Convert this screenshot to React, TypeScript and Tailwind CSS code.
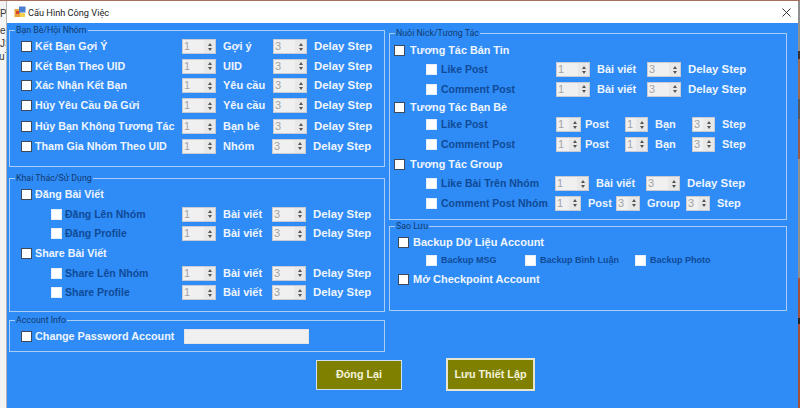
import type { ReactNode } from 'react';

const Check = ({ dark }: { dark?: boolean }) => (
  <span
    className={`box-border block h-[11px] w-[11px] shrink-0 bg-white ${dark ? 'border border-[#3c4a5c]' : 'border border-[#e6eef9]'}`}
  />
);

const Spin = ({ value, w }: { value: number; w: number }) => (
  <span
    className="box-border flex h-[15px] shrink-0 items-stretch border border-[#c8ccd2] bg-[#f0f0f0] text-[11px] font-normal leading-[13px] text-[#a3a3a3]"
    style={{ width: w }}
  >
    <span className="flex-1 pl-[1px]">{value}</span>
    <span className="flex w-[11px] flex-col items-center justify-center gap-[2px] bg-[#e8e8e8]">
      <span className="h-0 w-0 border-x-[2.5px] border-b-[3px] border-x-transparent border-b-[#555]" />
      <span className="h-0 w-0 border-x-[2.5px] border-t-[3px] border-x-transparent border-t-[#555]" />
    </span>
  </span>
);

const Txt = ({ w, ml, children }: { w?: number; ml: number; children: ReactNode }) => (
  <span className="shrink-0 text-[#eef5ff]" style={{ width: w, marginLeft: ml }}>
    {children}
  </span>
);

const Delay = ({ ml = 7 }: { ml?: number }) => (
  <span className="shrink-0 text-[11.4px] text-[#eef5ff]" style={{ marginLeft: ml }}>
    Delay Step
  </span>
);

interface RowProps {
  label: string;
  sub?: boolean;
  unit: string;
  unitW?: number;
}

// one option line of the left column
const Row = ({ label, sub, unit, unitW = 50 }: RowProps) => (
  <div className={`flex h-[19.6px] items-center ${sub ? 'pl-[41px]' : 'pl-[11px]'}`}>
    <Check dark={!sub} />
    <span
      className={`ml-[3px] shrink-0 ${sub ? 'w-[117px] text-[10.5px] text-[#0f4a96]' : 'w-[147px] text-[10.7px] text-[#eef5ff]'}`}
    >
      {label}
    </span>
    <Spin value={1} w={34} />
    <Txt ml={7} w={unitW}>
      {unit}
    </Txt>
    <Spin value={3} w={34} />
    <Delay />
  </div>
);

const Head = ({ label }: { label: string }) => (
  <div className="flex h-[19.6px] items-center pl-[11px] text-[10.7px] text-[#eef5ff]">
    <Check dark />
    <span className="ml-[3px]">{label}</span>
  </div>
);

const Group = ({
  title,
  className,
  children,
}: {
  title: string;
  className: string;
  children: ReactNode;
}) => (
  <fieldset className={`relative box-border border border-[#a9cdf5] ${className}`}>
    <span className="absolute left-[5px] top-[-6px] bg-[#2f8cf6] px-[1px] font-['Roboto',sans-serif] text-[8.8px] font-normal leading-[11px] text-[#123a6e]">
      {title}
    </span>
    {children}
  </fieldset>
);

const RightHead = ({ label, h }: { label: string; h: string }) => (
  <div className={`flex items-center pl-[4px] text-[10.8px] text-[#eef5ff] ${h}`}>
    <Check dark />
    <span className="ml-[5px]">{label}</span>
  </div>
);

const RightSub = ({
  label,
  labelW = 115,
  children,
}: {
  label: string;
  labelW?: number;
  children: ReactNode;
}) => (
  <div className="flex h-[19.5px] items-center pl-[36px]">
    <Check />
    <span className="ml-[4px] shrink-0 text-[10.5px] text-[#0f4a96]" style={{ width: labelW }}>
      {label}
    </span>
    {children}
  </div>
);

const rightStrip = [
  ['h-[50px]', 'bg-[#8f8f8f]'],
  ['h-[8px]', 'bg-[#3a3030]'],
  ['h-[40px]', 'bg-[#a06a50]'],
  ['h-[20px]', 'bg-[#555a60]'],
  ['h-[40px]', 'bg-[#9a5a48]'],
  ['h-[120px]', 'bg-[#8f8f8f]'],
  ['h-[40px]', 'bg-[#a5503a]'],
  ['h-[6px]', 'bg-[#23262c]'],
  ['h-[84px]', 'bg-[#a5503a]'],
];

export default function App() {
  return (
    <div className="h-[408px] w-[800px] overflow-hidden whitespace-nowrap bg-[#f3f3f3] font-['Liberation_Sans',Arial,sans-serif] text-[11px] font-bold leading-[15px]">
      <div className="h-[1px] bg-[#a8705a]" />
      <div className="flex h-[407px]">
        <div className="w-[7px] shrink-0 overflow-hidden border-r border-[#b5b5b5] pt-[6px] text-[10px] font-normal leading-[13px] text-[#333]">
          <div>Pa</div>
          <div className="mt-[4px] ml-[-5px]">se</div>
          <div>JS</div>
          <div className="ml-[-1px]">u7</div>
        </div>
        <div className="w-[791px] shrink-0">
          <div className="flex h-[22px] items-center bg-white pl-[7px] pr-[7px]">
            <svg width="12" height="12" viewBox="0 0 12 12" className="shrink-0">
              <rect x="0.5" y="3" width="6" height="8" fill="#e8a33d" />
              <rect x="5" y="0.5" width="6.5" height="6" fill="#4a7fd0" />
              <rect x="2" y="5" width="3" height="3" fill="#d9412c" />
              <rect x="6" y="7" width="5" height="4" fill="#f2d24b" />
            </svg>
            <span className="ml-[2px] font-['Roboto',sans-serif] text-[9.2px] font-normal text-[#222]">
              Cấu Hình Công Việc
            </span>
            <svg width="9" height="9" viewBox="0 0 9 9" className="ml-auto shrink-0">
              <path d="M0.5 0.5 L8.5 8.5 M8.5 0.5 L0.5 8.5" stroke="#222" strokeWidth="0.9" fill="none" />
            </svg>
          </div>
          <div className="h-[385px] bg-[#2f8cf6]">
            <div className="flex h-[329px] pl-[2px] pt-[7px]">
              <div className="flex w-[376px] shrink-0 flex-col">
                <Group title="Bạn Bè/Hội Nhóm" className="h-[137px] pt-[6px]">
                  <Row label="Kết Bạn Gợi Ý" unit="Gợi ý" />
                  <Row label="Kết Bạn Theo UID" unit="UID" />
                  <Row label="Xác Nhận Kết Bạn" unit="Yêu cầu" />
                  <Row label="Hủy Yêu Cầu Đã Gửi" unit="Yêu cầu" />
                  <div className="h-[1.5px]" />
                  <Row label="Hủy Bạn Không Tương Tác" unit="Bạn bè" />
                  <Row label="Tham Gia Nhóm Theo UID" unit="Nhóm" unitW={49} />
                </Group>
                <Group title="Khai Thác/Sử Dụng" className="mt-[11px] h-[134px] pt-[6px]">
                  <Head label="Đăng Bài Viết" />
                  <Row label="Đăng Lên Nhóm" sub unit="Bài viết" unitW={49} />
                  <Row label="Đăng Profile" sub unit="Bài viết" unitW={49} />
                  <Head label="Share Bài Viết" />
                  <Row label="Share Lên Nhóm" sub unit="Bài viết" unitW={49} />
                  <Row label="Share Profile" sub unit="Bài viết" unitW={49} />
                </Group>
                <Group title="Account Info" className="mt-[8px] h-[32px] pt-[6px]">
                  <div className="flex h-[19px] items-center pl-[11px]">
                    <Check dark />
                    <span className="ml-[3px] w-[149px] shrink-0 text-[10.8px] text-[#eef5ff]">
                      Change Password Account
                    </span>
                    <span className="h-[15px] w-[125px] border border-[#e4e4e4] bg-[#f0f0f0]" />
                  </div>
                </Group>
              </div>
              <div className="ml-[4px] flex w-[398px] shrink-0 flex-col pt-[3px]">
                <Group title="Nuôi Nick/Tương Tác" className="h-[187px] pt-[6px]">
                  <RightHead label="Tương Tác Bản Tin" h="h-[20px]" />
                  <RightSub label="Like Post">
                    <Spin value={1} w={34} />
                    <Txt ml={7} w={50}>Bài viết</Txt>
                    <Spin value={3} w={34} />
                    <Delay />
                  </RightSub>
                  <RightSub label="Comment Post">
                    <Spin value={1} w={34} />
                    <Txt ml={7} w={50}>Bài viết</Txt>
                    <Spin value={3} w={34} />
                    <Delay />
                  </RightSub>
                  <RightHead label="Tương Tác Bạn Bè" h="h-[16px]" />
                  <RightSub label="Like Post">
                    <Spin value={1} w={25} />
                    <Txt ml={4} w={40}>Post</Txt>
                    <Spin value={1} w={23} />
                    <Txt ml={7} w={37}>Bạn</Txt>
                    <Spin value={3} w={23} />
                    <Txt ml={7}>Step</Txt>
                  </RightSub>
                  <RightSub label="Comment Post">
                    <Spin value={1} w={25} />
                    <Txt ml={4} w={40}>Post</Txt>
                    <Spin value={1} w={23} />
                    <Txt ml={7} w={37}>Bạn</Txt>
                    <Spin value={3} w={23} />
                    <Txt ml={7}>Step</Txt>
                  </RightSub>
                  <RightHead label="Tương Tác Group" h="h-[20px]" />
                  <RightSub label="Like Bài Trên Nhóm" labelW={114}>
                    <Spin value={1} w={34} />
                    <Txt ml={7} w={50}>Bài viết</Txt>
                    <Spin value={3} w={34} />
                    <Delay />
                  </RightSub>
                  <RightSub label="Comment Post Nhóm" labelW={114}>
                    <Spin value={1} w={26} />
                    <Txt ml={7} w={28}>Post</Txt>
                    <Spin value={3} w={24} />
                    <Txt ml={7} w={39}>Group</Txt>
                    <Spin value={3} w={24} />
                    <Txt ml={7}>Step</Txt>
                  </RightSub>
                </Group>
                <Group title="Sao Lưu" className="mt-[6px] h-[85px] pt-[5px]">
                  <div className="flex h-[20px] items-center pl-[8px] text-[#eef5ff]">
                    <Check dark />
                    <span className="ml-[4px]">Backup Dữ Liệu Account</span>
                  </div>
                  <div className="flex h-[17px] items-center pl-[36px] text-[9px] text-[#0f4a96]">
                    <Check />
                    <span className="ml-[4px] w-[84px] shrink-0">Backup MSG</span>
                    <Check />
                    <span className="ml-[4px] w-[95px] shrink-0">Backup Bình Luận</span>
                    <Check />
                    <span className="ml-[4px]">Backup Photo</span>
                  </div>
                  <div className="flex h-[20px] items-center pl-[8px] text-[#eef5ff]">
                    <Check dark />
                    <span className="ml-[4px]">Mở Checkpoint Account</span>
                  </div>
                </Group>
              </div>
            </div>
            <div className="mt-[6px] flex h-[33px] items-center pl-[309px] text-[10.8px] text-[#f3f3dc]">
              <button className="box-border h-[30px] w-[86px] border border-[#cfe2f5] bg-[#808000]">
                Đóng Lại
              </button>
              <button className="ml-[44px] box-border h-[33px] w-[89px] border-2 border-[#e6e6d0] bg-[#808000]">
                Lưu Thiết Lập
              </button>
            </div>
          </div>
        </div>
        <div className="flex w-[2px] shrink-0 flex-col">
          {rightStrip.map(([h, bg], i) => (
            <div key={i} className={`${h} ${bg}`} />
          ))}
        </div>
      </div>
    </div>
  );
}
